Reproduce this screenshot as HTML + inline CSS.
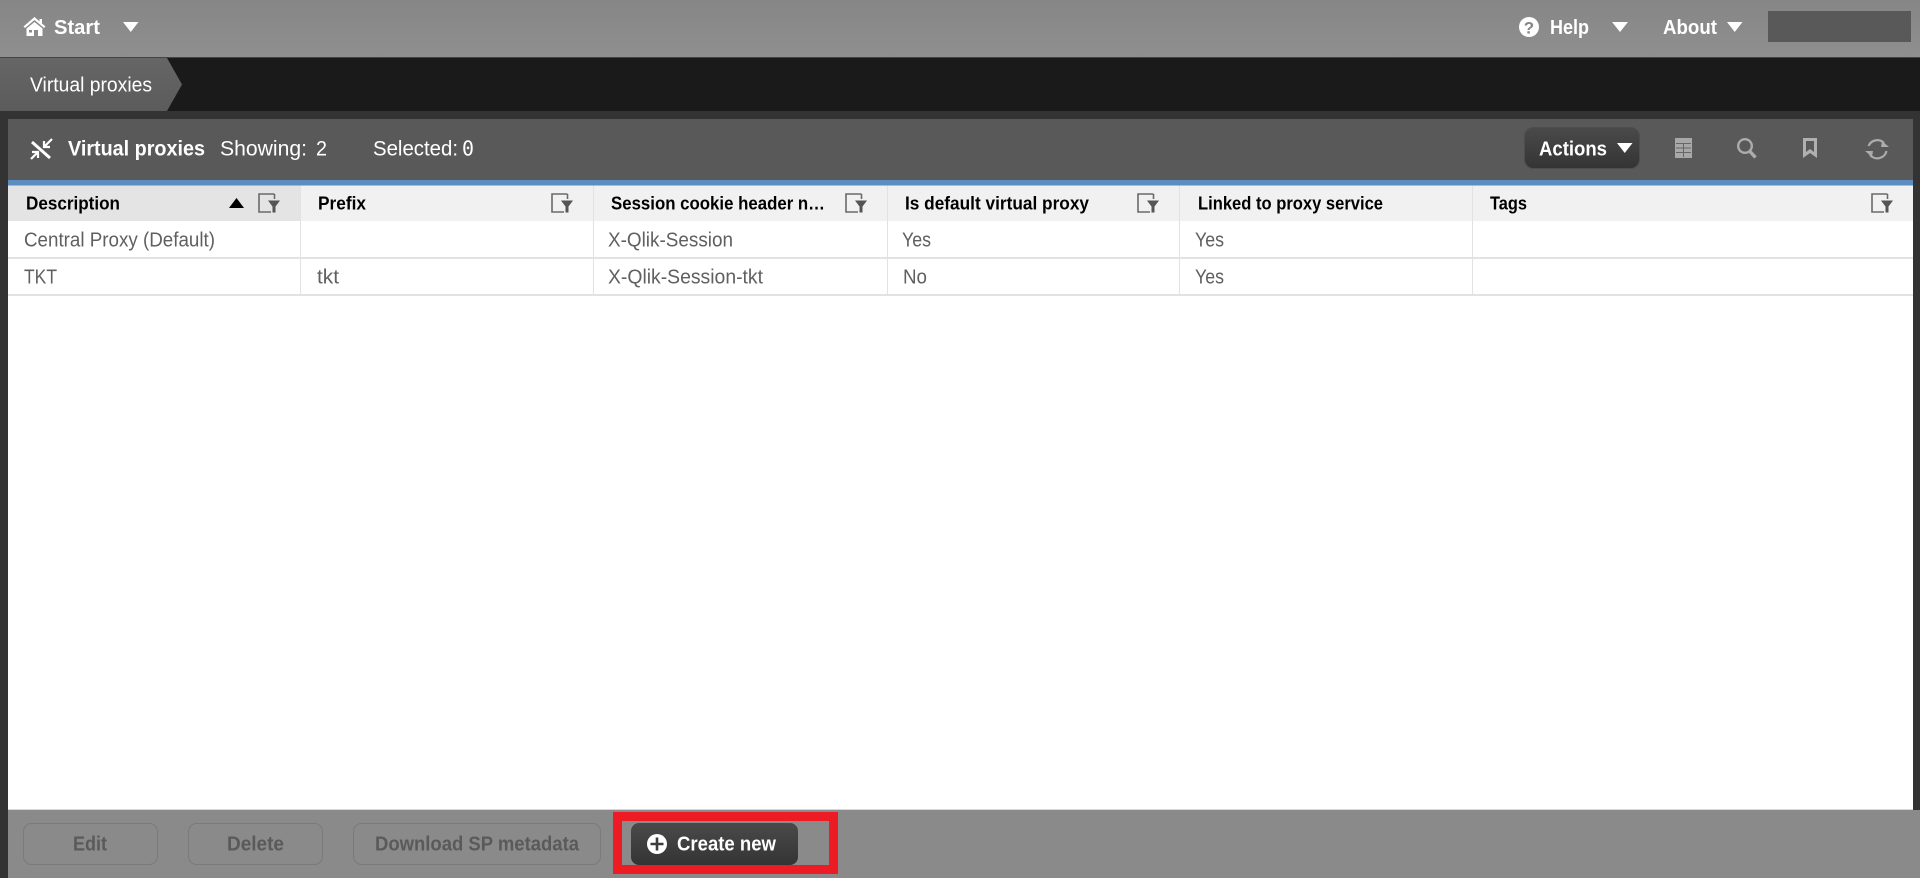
<!DOCTYPE html>
<html lang="en">
<head>
<meta charset="utf-8">
<title>Virtual proxies</title>
<style>
html,body{margin:0;padding:0;width:1920px;height:878px;overflow:hidden;background:#333}
svg{display:block}
text{font-family:"Liberation Sans",sans-serif;font-size:20px;white-space:pre}
.b{font-weight:bold}
.w{fill:#fff}
.h{fill:#000;font-weight:bold;font-size:18.500px}
.c{fill:#606060;font-size:20px}
.d{fill:#5a5a5a;font-weight:bold}
</style>
</head>
<body>
<svg width="1920" height="878" viewBox="0 0 1920 878" xmlns="http://www.w3.org/2000/svg">
<defs>
<linearGradient id="top" x1="0" y1="0" x2="0" y2="1"><stop offset="0" stop-color="#868686"/><stop offset="1" stop-color="#8f8f8f"/></linearGradient>
<linearGradient id="tab" x1="0" y1="0" x2="0" y2="1"><stop offset="0" stop-color="#666"/><stop offset="1" stop-color="#5b5b5b"/></linearGradient>
<linearGradient id="btn" x1="0" y1="0" x2="0" y2="1"><stop offset="0" stop-color="#4a4a4a"/><stop offset="1" stop-color="#343434"/></linearGradient>
<g id="flt"><path d="M16.500 1H1v18h12" fill="none" stroke="#6a6a6a" stroke-width="1.600"/><path d="M16.500 1v5" fill="none" stroke="#6a6a6a" stroke-width="1.600"/><path d="M10 7.500h12l-4.500 6v6h-3v-6z" fill="#555"/></g>
</defs>

<!-- top bar -->
<rect width="1920" height="57" fill="url(#top)"/>
<rect y="57" width="1920" height="1" fill="#444"/>
<path d="M34.500 17 23.500 26.500 25 28 34.500 20 44 28 45.500 26.500 42 23.500V19h-2.500v2.400z" fill="#fff"/>
<path d="M26.500 28.500 34.500 22 42.500 28.500V36H38v-6h-4v6h-7.500z" fill="#fff"/>
<rect x="29" y="30" width="3" height="2.500" fill="#8a8a8a"/>
<text x="54" y="34" class="b w" textLength="46" lengthAdjust="spacingAndGlyphs">Start</text>
<path d="M123 22h15.500l-7.750 10z" fill="#fff"/>
<circle cx="1529" cy="27" r="10" fill="#fff"/>
<text x="1529" y="33.500" text-anchor="middle" style="font-size:17px;font-weight:bold;fill:#858585">?</text>
<text x="1550" y="34" class="b w" textLength="39" lengthAdjust="spacingAndGlyphs">Help</text>
<path d="M1612 22h16l-8 10z" fill="#fff"/>
<text x="1663" y="34" class="b w" textLength="54" lengthAdjust="spacingAndGlyphs">About</text>
<path d="M1727 22h15.500l-7.750 10z" fill="#fff"/>
<rect x="1768" y="11" width="143" height="31" fill="#595959"/>

<!-- breadcrumb -->
<rect y="58" width="1920" height="53" fill="#1a1a1a"/>
<path d="M0 58H167L182 84.500 167 111H0z" fill="url(#tab)"/>
<text x="30" y="91.500" class="w" textLength="122" lengthAdjust="spacingAndGlyphs">Virtual proxies</text>

<!-- panel -->
<rect x="8" y="119" width="1905" height="61" fill="#595959"/>
<rect x="8" y="180" width="1905" height="5.500" fill="#5b8dc0"/>
<rect x="8" y="185" width="1905" height="625" fill="#fff"/>
<rect x="8" y="180" width="1905" height="5.500" fill="#5b8dc0"/>

<g stroke="#fff" fill="none">
<path d="M32 142 50 158" stroke-width="3"/>
<path d="M52 139 44 147M44 141v6h6" stroke-width="2.200"/>
<path d="M31 159 38 152M38 158v-6h-6" stroke-width="2.200"/>
</g>
<text x="68" y="155.500" class="b w" textLength="137" lengthAdjust="spacingAndGlyphs" style="font-size:21px">Virtual proxies</text>
<text x="220" y="155.500" class="w" textLength="87" lengthAdjust="spacingAndGlyphs" style="font-size:21px">Showing:</text>
<text x="316" y="155.500" class="w" textLength="11" lengthAdjust="spacingAndGlyphs" style="font-size:21px">2</text>
<text x="373" y="155.500" class="w" textLength="85" lengthAdjust="spacingAndGlyphs" style="font-size:21px">Selected:</text>
<text x="462" y="155.500" class="w" textLength="12" lengthAdjust="spacingAndGlyphs" style="font-family:'DejaVu Sans Mono',monospace;font-size:20px">0</text>

<rect x="1524.500" y="127.500" width="115" height="41" rx="9" fill="url(#btn)" stroke="#4d4d4d"/>
<text x="1539" y="155.500" class="b w" textLength="68" lengthAdjust="spacingAndGlyphs">Actions</text>
<path d="M1617 143h15.500l-7.750 10z" fill="#fff"/>

<!-- toolbar icons -->
<rect x="1675" y="138" width="17" height="20" fill="#a8a8a8"/>
<path d="M1676 143.500h15M1676 148h15M1676 152.500h15M1683.500 143v14" stroke="#666" stroke-width="1" fill="none"/>
<path fill-rule="evenodd" d="M1803 138h14v20l-7-5-7 5zM1806 141v11l4-3 4 3v-11z" fill="#b0b0b0"/>
<g fill="none" stroke="#acacac">
<circle cx="1745" cy="146" r="6.800" stroke-width="2.400"/>
<path d="M1750 151.500 1755.500 157.500" stroke-width="3.400"/>
<path d="M1868.500 146A9.500 9.500 0 0 1 1884 143" stroke-width="2.200"/>
<path d="M1886.500 151A9.500 9.500 0 0 1 1870 155" stroke-width="2.200"/>
</g>
<path d="M1882 141l7 6h-8zM1872 157l-7-6h8z" fill="#acacac"/>

<!-- table header -->
<rect x="8" y="185.500" width="1905" height="35.500" fill="#f1f1f1"/>
<rect x="8" y="185.500" width="293" height="35.500" fill="#e4e4e4"/>
<g fill="#e2e2e2">
<rect x="300" y="185.500" width="1" height="110"/>
<rect x="593" y="185.500" width="1" height="110"/>
<rect x="887" y="185.500" width="1" height="110"/>
<rect x="1179" y="185.500" width="1" height="110"/>
<rect x="1472" y="185.500" width="1" height="110"/>
<rect x="8" y="257" width="1905" height="2"/>
<rect x="8" y="294" width="1905" height="2"/>
</g>
<text x="26" y="209.500" class="h" textLength="94" lengthAdjust="spacingAndGlyphs">Description</text>
<path d="M229 208l7.500-10 7.500 10z" fill="#000"/>
<use href="#flt" x="258" y="193"/>
<text x="318" y="209.500" class="h" textLength="48" lengthAdjust="spacingAndGlyphs">Prefix</text>
<use href="#flt" x="551" y="193"/>
<text x="611" y="209.500" class="h" textLength="214" lengthAdjust="spacingAndGlyphs">Session cookie header n…</text>
<use href="#flt" x="845" y="193"/>
<text x="905" y="209.500" class="h" textLength="184" lengthAdjust="spacingAndGlyphs">Is default virtual proxy</text>
<use href="#flt" x="1137" y="193"/>
<text x="1198" y="209.500" class="h" textLength="185" lengthAdjust="spacingAndGlyphs">Linked to proxy service</text>
<text x="1490" y="209.500" class="h" textLength="37" lengthAdjust="spacingAndGlyphs">Tags</text>
<use href="#flt" x="1871" y="193"/>

<!-- rows -->
<text x="24" y="246.500" class="c" textLength="191" lengthAdjust="spacingAndGlyphs">Central Proxy (Default)</text>
<text x="608" y="246.500" class="c" textLength="125" lengthAdjust="spacingAndGlyphs">X-Qlik-Session</text>
<text x="902" y="246.500" class="c" textLength="29" lengthAdjust="spacingAndGlyphs">Yes</text>
<text x="1195" y="246.500" class="c" textLength="29" lengthAdjust="spacingAndGlyphs">Yes</text>
<text x="24" y="283.500" class="c" textLength="33" lengthAdjust="spacingAndGlyphs">TKT</text>
<text x="317" y="283.500" class="c" textLength="22" lengthAdjust="spacingAndGlyphs">tkt</text>
<text x="608" y="283.500" class="c" textLength="155" lengthAdjust="spacingAndGlyphs">X-Qlik-Session-tkt</text>
<text x="903" y="283.500" class="c" textLength="24" lengthAdjust="spacingAndGlyphs">No</text>
<text x="1195" y="283.500" class="c" textLength="29" lengthAdjust="spacingAndGlyphs">Yes</text>

<!-- footer -->
<rect x="8" y="810" width="1912" height="68" fill="#8a8a8a"/>
<rect x="8" y="809" width="1905" height="1" fill="#d8d8d8"/>
<g fill="none" stroke="#7a7a7a">
<rect x="23.500" y="823.500" width="134" height="41" rx="8"/>
<rect x="188.500" y="823.500" width="134" height="41" rx="8"/>
<rect x="353.500" y="823.500" width="247" height="41" rx="8"/>
</g>
<text x="73" y="850.500" class="d" textLength="34" lengthAdjust="spacingAndGlyphs">Edit</text>
<text x="227" y="850.500" class="d" textLength="57" lengthAdjust="spacingAndGlyphs">Delete</text>
<text x="375" y="850.500" class="d" textLength="204" lengthAdjust="spacingAndGlyphs">Download SP metadata</text>

<rect x="617.500" y="816.500" width="216" height="53" fill="none" stroke="#ed1c24" stroke-width="9"/>
<rect x="631" y="823" width="167" height="42" rx="8" fill="url(#btn)"/>
<circle cx="657" cy="844" r="10" fill="#fff"/>
<path d="M657 837.500v13M650.500 844h13" stroke="#3c3c3c" stroke-width="2.600"/>
<text x="677" y="850.500" class="b w" textLength="99" lengthAdjust="spacingAndGlyphs">Create new</text>
</svg>
</body>
</html>
